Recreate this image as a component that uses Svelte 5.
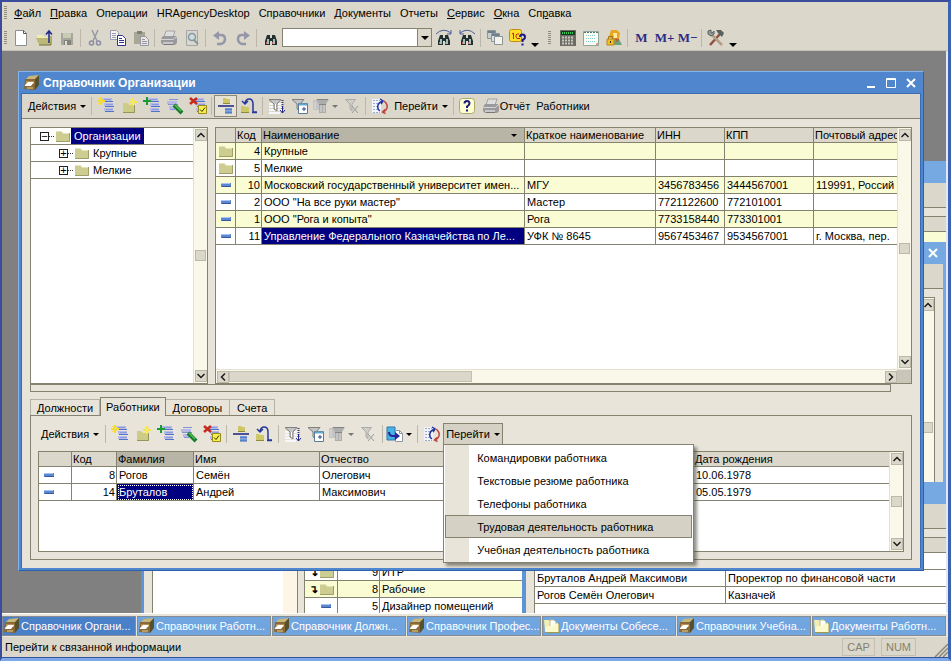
<script>
  const menus = [
    ['', 'Ф', 'айл'], ['', 'П', 'равка'], ['Операции', '', ''], ['HRAgencyDesktop', '', ''],
    ['Справочники', '', ''], ['Документы', '', ''], ['Отчеты', '', ''], ['', 'С', 'ервис'],
    ['', 'О', 'кна'], ['Сп', 'р', 'авка']
  ];

  const standardTools = [
    ['new', 'Новый'], ['open', 'Открыть'], ['save', 'Сохранить'], null,
    ['cut', 'Вырезать'], ['copy', 'Копировать'], ['paste', 'Вставить'], null,
    ['print', 'Печать'], ['preview', 'Просмотр'], null,
    ['undo', 'Отменить'], ['redo', 'Повторить'], null,
    ['find', 'Найти']
  ];

  const listTools = [
    ['additem', 'Добавить'], ['addfolder', 'Новая группа'], ['addcopy', 'Добавить копированием'],
    ['edit', 'Изменить'], ['mark', 'Пометить на удаление'], null,
    ['hier', 'Иерархический просмотр'], ['move', 'Переместить в группу'], null,
    ['filtersort', 'Отбор и сортировка'], ['filterval', 'Отбор по значению'],
    ['filterhist', 'История отборов'], ['filteroff', 'Отключить отбор'], null
  ];

  const orgs = [
    ['folder', 4, 'Крупные', '', '', '', ''],
    ['folder', 5, 'Мелкие', '', '', '', ''],
    ['item', 10, 'Московский государственный университет имен...', 'МГУ', '3456783456', '3444567001', '119991, Россий'],
    ['item', 2, 'ООО "На все руки мастер"', 'Мастер', '7721122600', '772101001', ''],
    ['item', 1, 'ООО "Рога и копыта"', 'Рога', '7733158440', '773301001', ''],
    ['item', 11, 'Управление Федерального Казначейства по Ле...', 'УФК № 8645', '9567453467', '9534567001', 'г. Москва, пер.']
  ];

  const workers = [
    [8, 'Рогов', 'Семён', 'Олегович', '10.06.1978'],
    [14, 'Бруталов', 'Андрей', 'Максимович', '05.05.1979']
  ];

  const tabs = ['Должности', 'Работники', 'Договоры', 'Счета'];
  let activeTab = $state('Работники');
  let menuOpen = $state(true);
  let query = $state('');

  const goMenu = [
    'Командировки работника', 'Текстовые резюме работника', 'Телефоны работника',
    'Трудовая деятельность работника', 'Учебная деятельность работника'
  ];

  const tasks = [
    ['book', 'Справочник Органи...'], ['book', 'Справочник Работн...'], ['book', 'Справочник Должн...'],
    ['book', 'Справочник Профес...'], ['docs', 'Документы Собесе...'],
    ['book', 'Справочник Учебна...'], ['docs', 'Документы Работн...']
  ];
</script>

{#snippet bars()}
  <path d="M4 1.500h10M6 6.500h9M6 11.500h9" stroke="#b9b9e6" stroke-width="3" />
  <path d="M5 3.500h10M7 8.500h9M7 13.500h9" stroke="#4f74c8" />
  <path d="M6 1.500h7M8 6.500h7M8 11.500h7" stroke="#8d9ddb" />
{/snippet}

{#snippet funnel(c)}
  <path d="M0 1.500h12L8 6v7l-3-2V6z" fill={c} stroke="#80807c" />
  <path d="M6.500 6v5" stroke="#fff" />
{/snippet}

{#snippet binoculars()}
  <path d="M4 5h3v3h2V5h3l1 3 1 3v4H9v-4H7v4H2v-4l1-3z" fill="#24302f" />
  <path d="M4 9h2v5H4zM10 9h2v5h-2z" fill="#a4c0bd" />
  <path d="M3 12h1v2H3zM9 12h1v2H9z" fill="#c66" />
{/snippet}

{#snippet icon(name)}
  <svg class="icon" viewBox="0 0 16 16" fill="none" aria-hidden="true">
    {#if name === 'new'}
      <path d="M2.500.5h8l3 3v12h-11z" fill="#fff" stroke="#8b8f94" /><path d="M10.500.5v3h3" stroke="#555" />
    {:else if name === 'open'}
      <path d="M1 5h6l1 2h7v8H2z" fill="#eeeeb0" /><path d="M0 8h13l2 7H3z" fill="#bcb878" /><path d="M3 15h12V6" stroke="#77733a" /><path d="M13 13V2M10 4.500L13 1l3 3.500" stroke="#1d2b86" stroke-width="1.500" />
    {:else if name === 'save'}
      <path d="M2 3h12v12H2z" fill="#a6a69a" /><path d="M4 3h8v5H4z" fill="#c8cbb4" /><path d="M5 10h7v5H5z" fill="#83837b" /><path d="M6 11h2v4H6z" fill="#deded4" />
    {:else if name === 'cut'}
      <path d="M5 0l5 11M11 0L6 11" stroke="#9a9aa6" stroke-width="1.500" /><circle cx="4.500" cy="13" r="2" stroke="#8c8ca5" stroke-width="1.500" /><circle cx="11.500" cy="13" r="2" stroke="#8c8ca5" stroke-width="1.500" />
    {:else if name === 'copy'}
      <path d="M.5.500h6l2 2v7h-8z" fill="#f4f4ee" stroke="#9b9bb4" /><path d="M2 3.500h4M2 5.500h4M2 7.500h4" stroke="#9b9bb4" /><path d="M7.500 5.500h5l3 3v7h-8z" fill="#fff" stroke="#33338f" /><path d="M9 8.500h3M9 10.500h5M9 12.500h5" stroke="#33338f" />
    {:else if name === 'paste'}
      <path d="M1 2h11v12H1z" fill="#a9a795" /><path d="M4 1h5v3H4z" fill="#7f7f77" /><path d="M7.500 6.500h5l3 3v6h-8z" fill="#e9e7de" stroke="#9797a5" /><path d="M9 9.500h3M9 11.500h5M9 13.500h5" stroke="#9797a5" />
    {:else if name === 'print'}
      <path d="M5 1h9l-2 6H3z" fill="#dedede" stroke="#a2a2a2" /><path d="M2 6h13l1 2v5l-2 2H2l-2-2V9z" fill="#9a9a9e" /><path d="M0 9.500h12l4-3" stroke="#d4d4d4" /><path d="M2 12h10v2H2z" fill="#c8c8c8" /><path d="M3 14.500h9" stroke="#777" />
    {:else if name === 'preview'}
      <path d="M2.500.5h11v15h-11z" fill="#dad8ce" stroke="#a3a7a7" /><circle cx="8" cy="7" r="3.500" fill="#cddcdd" stroke="#8596a0" stroke-width="1.500" /><path d="M10 10l4 4" stroke="#8596a0" stroke-width="2" />
    {:else if name === 'undo'}
      <path d="M4 5h5q4 0 4 4t-4 5H5" stroke="#9696ab" stroke-width="2.500" /><path d="M1 5.500L7 1v9z" fill="#9696ab" />
    {:else if name === 'redo'}
      <path d="M12 5H7q-4 0-4 4t4 5h4" stroke="#9696ab" stroke-width="2.500" /><path d="M15 5.500L9 1v9z" fill="#9696ab" />
    {:else if name === 'find'}
      {@render binoculars()}
    {:else if name === 'findnext'}
      <path d="M0 4Q7-3 15 3M15 0v4h-4" stroke="#4b5c9a" />{@render binoculars()}
    {:else if name === 'findprev'}
      <path d="M16 4Q9-3 1 3M1 0v4h4" stroke="#4b5c9a" />{@render binoculars()}
    {:else if name === 'windows'}
      <path d="M.5.500h8v8h-8z" fill="#c9d0d2" stroke="#8d9494" /><path d="M1 1h7v2H1z" fill="#6e7f90" /><path d="M4.500 3.500h8v8h-8z" fill="#dce2e2" stroke="#8d9494" /><path d="M5 4h7v2H5z" fill="#6e7f90" /><path d="M7.500 6.500h8v8h-8z" fill="#f2f2ee" stroke="#8d9494" />
    {:else if name === 'help1c'}
      <rect x="-.5" y="-.5" width="12" height="12" rx="2" fill="#ffdf25" stroke="#c08a18" /><path d="M2 4l1.500-1v6M9 4H7L6 5v2l1 1.500h3" stroke="#c4251d" /><path d="M10 7q0-2.500 2.500-2.500T15 7q0 2-2.500 3v2M12.500 13.500v2" stroke="#1b1b84" stroke-width="2" />
    {:else if name === 'calc'}
      <path d="M0 0h16v16H0z" fill="#6d6d66" /><path d="M1 1h14v4H1z" fill="#11371c" /><path d="M2 3h12" stroke="#35cc57" stroke-width="2" stroke-dasharray="1 1" /><path d="M2 7.500h12M2 10.500h12M2 13.500h12" stroke="#c8c8be" stroke-width="2" stroke-dasharray="2 1" />
    {:else if name === 'calendar'}
      <path d="M.5 1.500h15v14H.5z" fill="#fffff3" stroke="#8fa59f" /><path d="M1 2.500h14" stroke="#4e7770" stroke-dasharray="2 1" /><path d="M3 5.500h10M3 8.500h10M3 11.500h10" stroke="#80ced2" stroke-dasharray="1 1" /><path d="M13 14h2" stroke="#d33" />
    {:else if name === 'user'}
      <path d="M5 0h6l3 3-1 6H6L3 7z" fill="#e8a81e" /><path d="M7 3h4v5H8z" fill="#ffe9a0" /><path d="M8 9h5l3 6H8z" fill="#6aa47f" /><path d="M9 8l4 1-2 4z" fill="#c53" /><path d="M1 9h7v6H1z" fill="#f4bf20" stroke="#b9851a" /><path d="M2.500 9V6.500h4V9" stroke="#a2731a" /><path d="M4 11h1v2H4z" fill="#332" />
    {:else if name === 'tools'}
      <path d="M2 15L12 4" stroke="#8e5140" stroke-width="2.500" /><path d="M3 4l11 11" stroke="#b59a85" stroke-width="2.500" /><path d="M8 0h5l3 3-2 4-4-4z" fill="#56615f" /><path d="M0 1v3l3 2 3-2V1L4 3H3V0z" fill="#94a09d" stroke="#59605e" />
    {:else if name === 'book'}
      <path d="M5 1l10-1-3 4H2z" fill="#c8b77a" /><path d="M1 4h10v11L0 14z" fill="#8b6936" /><path d="M11 4l4-4v10l-4 5z" fill="#55502e" /><path d="M2 6h8v3H2z" fill="#b88d4d" /><path d="M1 10l3-3h6l-3 4H1z" fill="#fff" /><path d="M3 13h6" stroke="#ddd08f" />
    {:else if name === 'docs'}
      <path d="M0 2h5l2 3h7v9H1z" fill="#f2edb0" /><path d="M6 2h4l2 2v5H6z" fill="#fff" stroke="#c5c08e" /><path d="M1 14l2-6h5l2-2h5v8z" fill="#fbf8cc" /><path d="M1 14.500h14V5" stroke="#a09848" />
    {:else if name === 'folder'}
      <path d="M1 3h5l2 2h7v9H1z" fill="#cdcc91" /><path d="M1 3.500h5l2 2h7" stroke="#e5e4b9" /><path d="M1 13.500h13.500V5" stroke="#a19f68" />
    {:else if name === 'item'}
      <path d="M3 6h10v4H3z" fill="#5c86d2" /><path d="M3 6.500h9" stroke="#a9c4ee" /><path d="M4 9.500h9" stroke="#36589c" />
    {:else if name === 'additem'}
      {@render bars()}<path d="M3 -1v8M-1 3h8" stroke="#f6dc2e" stroke-width="2" /><path d="M0 0l6 6M6 0L0 6" stroke="#f0d65a" />
    {:else if name === 'addfolder'}
      <path d="M2 5h4l2 2h6v8H2z" fill="#cdcc85" /><path d="M2 14.500h11.500V7" stroke="#96945a" /><path d="M12 0v8M8 4h8" stroke="#f4e54a" stroke-width="2" /><path d="M9 1l6 6M15 1L9 7" stroke="#f4e98a" />
    {:else if name === 'addcopy'}
      {@render bars()}<path d="M3-1v8M-1 3h8" stroke="#1b9b33" stroke-width="2" />
    {:else if name === 'edit'}
      <path d="M0 4.500h10M2 9.500h6" stroke="#b9b9e6" stroke-width="3" /><path d="M2 1.500h9M1 6.500h10M3 11.500h5" stroke="#7f95d8" /><path d="M7 7l8 8" stroke="#167a2c" stroke-width="4" /><path d="M8 7l6 6" stroke="#53c24e" stroke-width="1.500" />
    {:else if name === 'mark'}
      {@render bars()}<path d="M0 0l7 6M7 0L0 6" stroke="#c52a1d" stroke-width="2.500" /><path d="M8.500 7.500h8v8h-8z" fill="#f5ef4d" stroke="#9b8d1c" /><path d="M10 11.500l2 2 3-4" stroke="#33320c" />
    {:else if name === 'hier'}
      <path d="M5 0h3l1 1h3v4H5z" fill="#cdc767" /><path d="M5 5.500h7" stroke="#8f8a3c" /><path d="M0 8h16" stroke="#18227c" stroke-width="1.500" /><path d="M7 10h7v2H7zM7 13h7v2H7z" fill="#6f9be4" /><path d="M7 12h7M7 15h7" stroke="#3b62b3" />
    {:else if name === 'move'}
      <path d="M0 8h3l1 1h4v6H0z" fill="#cdc767" /><path d="M0 14.500h8" stroke="#8f8a3c" /><path d="M4 5Q5 1 8 1q4 0 4 5v8h4M1 3l3 3 3-3M11 14.500h5" stroke="#24389c" stroke-width="1.500" />
    {:else if name === 'filtersort'}
      <path d="M0 6h13M0 9h13M0 12h13M0 15h11" stroke="#f7f7fb" stroke-width="2" />{@render funnel('#c4c4c4')}<path d="M13.500 2v9" stroke="#39396e" stroke-dasharray="1 1" stroke-width="2" /><path d="M13.500 8v7M11 12l2.500 3 2.500-3" stroke="#26268f" />
    {:else if name === 'filterval'}
      {@render funnel('#c4c4c4')}<path d="M6.500 5.500h9v10h-9z" fill="#fdfdfd" stroke="#5c7b98" /><path d="M7 6.500h8" stroke="#62a8cf" stroke-width="2" /><path d="M11 10h2v2h-2z" stroke="#37408e" />
    {:else if name === 'filterhist'}
      <path d="M0 2h10v10H0z" fill="#c4c4c4" /><path d="M3 1h13l-3 5v9H6V6z" fill="#adadad" /><path d="M4 1.500h11M6 6.500h7" stroke="#858585" /><path d="M8 7v7M11 7v7M2 4v7" stroke="#ddd" />
    {:else if name === 'filteroff'}
      <path d="M1.500 1.500h10L8 6v7l-2-2V6z" fill="#cfcfc8" stroke="#aaa" /><path d="M8 8l6 7M14 8l-6 7" stroke="#999" />
    {:else if name === 'refresh'}
      <path d="M0 1h9v14H0z" fill="#f3f4fb" /><path d="M1 2.500h7M1 5.500h5M1 8.500h4M1 11.500h5M1 14.500h7" stroke="#9aa9cf" stroke-dasharray="2 1" /><path d="M8 13q-3-2-2-6 1-3 5-4M8 1l3 2-2 3" stroke="#20349e" stroke-width="1.500" /><path d="M12 3q4 3 3 7-1 3-4 4M13 11.500L10.500 14l3 1.500" stroke="#bf4038" stroke-width="1.500" />
    {:else if name === 'help'}
      <rect x=".5" y=".5" width="15" height="15" rx="3" fill="#ffffd2" stroke="#aaa96b" /><path d="M5.500 5.500Q5.500 3 8 3t2.500 2.500Q10.500 7 8 8.500V10M8 11.500v2" stroke="#1b1b84" stroke-width="2" />
    {:else if name === 'goto'}
      <path d="M0 1h8v13H0z" fill="#45b4e4" stroke="#3474ae" /><path d="M8.500 4.500h4l3 3v8h-7z" fill="#fff" stroke="#8e96a0" /><path d="M12.500 4.500v3h3" stroke="#8e96a0" /><path d="M2 6q0 4 4 4h3" stroke="#24249c" stroke-width="2" /><path d="M8 6l5 4-5 4z" fill="#24249c" />
    {/if}
  </svg>
{/snippet}

{#snippet tool(t, pressed)}
  {#if t}
    <button class="tool" class:pressed class:wide={t[0] === 'filterhist'} aria-label={t[1]}>
      {@render icon(t[0])}
      {#if t[0] === 'filterhist'}<i class="caret dim"></i>{/if}
    </button>
  {:else}
    <span class="sep"></span>
  {/if}
{/snippet}

{#snippet chevron(d)}
  <span class="sbtn"><svg viewBox="0 0 10 10" aria-hidden="true"><path {d} fill="none" stroke="#1c1c1c" stroke-width="1.500" /></svg></span>
{/snippet}

{#snippet vscroll()}
  <div class="vscroll">
    {@render chevron('M1.500 7L5 3.500 8.500 7')}
    <span class="thumb"></span>
    {@render chevron('M1.500 3L5 6.500 8.500 3')}
  </div>
{/snippet}

<div class="app">
  <nav class="menubar">
    <span class="grip"></span>
    {#each menus as [a, u, b]}
      <button>{a}{#if u}<u>{u}</u>{/if}{b}</button>
    {/each}
  </nav>

  <div class="apptools">
    <span class="grip"></span>
    {#each standardTools as t}{@render tool(t, false)}{/each}
    <div class="combo">
      <input type="text" aria-label="Поиск" bind:value={query} />
      <button aria-label="Раскрыть"><i class="caret big"></i></button>
    </div>
    {@render tool(['findnext', 'Найти далее'], false)}
    {@render tool(['findprev', 'Найти ранее'], false)}
    {@render tool(null, false)}
    {@render tool(['windows', 'Окна'], false)}
    {@render tool(['help1c', 'Справка'], false)}
    <button class="more" aria-label="Ещё"><i class="caret big"></i></button>
    <span class="grip second"></span>
    {@render tool(['calc', 'Калькулятор'], false)}
    {@render tool(['calendar', 'Календарь'], false)}
    {@render tool(['user', 'Пользователи'], false)}
    {@render tool(null, false)}
    <button class="tool mem">M</button>
    <button class="tool mem">M+</button>
    <button class="tool mem">M−</button>
    {@render tool(null, false)}
    {@render tool(['tools', 'Сервис'], false)}
    <button class="more" aria-label="Ещё"><i class="caret big"></i></button>
  </div>

  <main class="desktop">
    <section class="win back upper">
      <div class="title"></div>
      <div class="strip"></div>
      <div class="pad"></div>
      <div class="headstrip"></div>
      <div class="yellow"></div>
    </section>

    <section class="win back middle">
      <div class="title"><button aria-label="Закрыть"><svg viewBox="0 0 12 12"><path d="M2 2l8 8M10 2l-8 8" stroke="#fff" stroke-width="2" /></svg></button></div>
      <div class="inside">
        <div class="strip"></div>
        <div class="well">{@render vscroll()}</div>
      </div>
    </section>

    <section class="win back lower">
      <div class="title"></div>
      <div class="strip"></div>
      <div class="sheet">
        <table class="grid">
          <colgroup><col class="w-fio" /><col /></colgroup>
          <thead><tr><th></th><th></th></tr></thead>
          <tbody>
            <tr><td></td><td></td></tr>
            <tr><td>Бруталов Андрей Максимови</td><td>Проректор по финансовой части</td></tr>
            <tr><td>Рогов Семён Олегович</td><td>Казначей</td></tr>
          </tbody>
        </table>
      </div>
    </section>

    <section class="win posts">
      <div class="blank"></div>
      <div class="blankscroll"></div>
      <div class="postlist">
        <table class="grid">
          <colgroup><col class="w-mark" /><col class="w-num" /><col /></colgroup>
          <tbody>
            <tr><td class="pic"><span class="down">↴</span>{@render icon('folder')}</td><td class="num">9</td><td>ИТР</td></tr>
            <tr class="alt"><td class="pic"><span class="down">↴</span>{@render icon('folder')}</td><td class="num">8</td><td>Рабочие</td></tr>
            <tr><td class="pic right">{@render icon('item')}</td><td class="num">5</td><td>Дизайнер помещений</td></tr>
          </tbody>
        </table>
      </div>
    </section>

    <section class="win active">
      <header class="title">
        {@render icon('book')}
        <h1>Справочник Организации</h1>
        <button aria-label="Свернуть"><svg viewBox="0 0 12 12"><path d="M2 10h8" stroke="#fff" stroke-width="2" /></svg></button>
        <button aria-label="Развернуть"><svg viewBox="0 0 12 12"><path d="M1.500 1.500h9v9h-9zM1 2.500h10" fill="none" stroke="#fff" /></svg></button>
        <button aria-label="Закрыть"><svg viewBox="0 0 12 12"><path d="M2 2l8 8M10 2l-8 8" stroke="#fff" stroke-width="2" /></svg></button>
      </header>

      <div class="inside">
        <div class="toolbar main">
          <button class="text">Действия<i class="caret"></i></button>
          <span class="sep"></span>
          {#each listTools as t}{@render tool(t, t?.[0] === 'hier')}{/each}
          {@render tool(['refresh', 'Обновить'], false)}
          <button class="text">Перейти<i class="caret"></i></button>
          <span class="sep"></span>
          {@render tool(['help', 'Справка'], false)}
          <button class="text withicon">{@render icon('print')}Отчёт</button>
          <button class="text">Работники</button>
        </div>

        <div class="body">
          <div class="split">
            <div class="box tree">
              <ul>
                <li><span class="exp">−</span><span class="dots"></span>{@render icon('folder')}<span class="label sel">Организации</span></li>
                <li class="child"><span class="exp">+</span><span class="dots"></span>{@render icon('folder')}<span class="label">Крупные</span></li>
                <li class="child"><span class="exp">+</span><span class="dots"></span>{@render icon('folder')}<span class="label">Мелкие</span></li>
              </ul>
              {@render vscroll()}
            </div>

            <div class="box list">
              <div class="rows">
                <div class="clip">
                  <table class="grid">
                    <colgroup><col class="w-pic" /><col class="w-code" /><col class="w-name" /><col class="w-short" /><col class="w-inn" /><col class="w-kpp" /><col /></colgroup>
                    <thead>
                      <tr><th></th><th>Код</th><th class="sorted"><span class="sort">Наименование<i class="caret"></i></span></th><th>Краткое наименование</th><th>ИНН</th><th>КПП</th><th>Почтовый адрес</th></tr>
                    </thead>
                    <tbody>
                      {#each orgs as [kind, code, name, short, inn, kpp, addr], i}
                        <tr class:alt={i % 2 === 0}>
                          <td class="pic">{@render icon(kind)}</td>
                          <td class="num">{code}</td>
                          <td class:sel={code === 11}>{name}</td>
                          <td>{short}</td><td>{inn}</td><td>{kpp}</td><td>{addr}</td>
                        </tr>
                      {/each}
                    </tbody>
                  </table>
                </div>
                {@render vscroll()}
              </div>
              <div class="hscroll">
                {@render chevron('M7 1.500L3.500 5 7 8.500')}
                <div class="track"><span></span></div>
                {@render chevron('M3 1.500L6.500 5 3 8.500')}
                <span class="corner"></span>
              </div>
            </div>
          </div>

          <div class="splitter"></div>

          <div class="tabs" role="tablist">
            {#each tabs as t}
              <button role="tab" aria-selected={activeTab === t} class:on={activeTab === t} onclick={() => (activeTab = t)}>{t}</button>
            {/each}
          </div>

          <div class="page">
            <div class="toolbar">
              <button class="text">Действия<i class="caret"></i></button>
              <span class="sep"></span>
              {#each listTools as t}{@render tool(t, false)}{/each}
              <button class="tool wide" aria-label="Ввести на основании">{@render icon('goto')}<i class="caret"></i></button>
              <span class="sep"></span>
              {@render tool(['refresh', 'Обновить'], false)}
              <div class="dropdown">
                <button class="text opened" aria-expanded={menuOpen} onclick={() => (menuOpen = !menuOpen)}>Перейти<i class="caret"></i></button>
                {#if menuOpen}
                  <div class="menu" role="menu">
                    {#each goMenu as m, i}
                      <button role="menuitem" class:hot={i === 3}>{m}</button>
                    {/each}
                  </div>
                {/if}
              </div>
            </div>
            <div class="box staff">
              <div class="clip">
                <table class="grid">
                  <colgroup><col class="w-mark" /><col class="w-id" /><col class="w-last" /><col class="w-first" /><col class="w-mid" /><col /></colgroup>
                  <thead><tr><th></th><th>Код</th><th class="sorted">Фамилия</th><th>Имя</th><th>Отчество</th><th>Дата рождения</th></tr></thead>
                  <tbody>
                    {#each workers as [code, last, first, mid, born]}
                      <tr>
                        <td class="pic left">{@render icon('item')}</td>
                        <td class="num">{code}</td>
                        <td class:sel={code === 14} class:focus={code === 14}>{last}</td>
                        <td>{first}</td><td>{mid}</td><td>{born}</td>
                      </tr>
                    {/each}
                  </tbody>
                </table>
              </div>
              {@render vscroll()}
            </div>
          </div>
        </div>
      </div>
    </section>
  </main>

  <nav class="taskbar">
    {#each tasks as [kind, label], i}
      <button class:current={i === 0}>{@render icon(kind)}<span>{label}</span></button>
    {/each}
  </nav>

  <footer class="status">
    <span class="hint">Перейти к связанной информации</span>
    <span class="key">CAP</span>
    <span class="key">NUM</span>
    <svg class="resize" viewBox="0 0 14 14" aria-hidden="true"><path d="M1 14L14 1M5 14l9-9M9 14l5-5" stroke="#8b887c" stroke-width="1.500" /></svg>
  </footer>
</div>

<style>
  :global(body) { margin: 0; background: #7ea9e8; }
  * { box-sizing: border-box; }
  .app {
    --face: #dbd7ca;
    --paper: #e8e4d9;
    --line: #85826f;
    display: flex;
    flex-direction: column;
    height: 100vh;
    border-style: solid;
    border-color: #3c4c9c #3c62b4 #7ea9e8 #3c4c9c;
    border-width: 2px 3px 3px 2px;
    background: var(--face);
    font: 11px/16px "Liberation Sans", Arial, sans-serif;
    color: #000;
    overflow: hidden;
  }
  button { font: inherit; color: inherit; background: none; border: 0; padding: 0; margin: 0; white-space: nowrap; }
  .icon { width: 16px; height: 16px; flex: none; display: block; overflow: visible; }
  .caret { display: inline-block; border: 3px solid transparent; border-top-color: #000; border-bottom: 0; flex: none; }
  .caret.big { border-width: 4px 4px 0; }
  .caret.dim { border-top-color: #777; }
  .grip { width: 3px; height: 13px; flex: none; background: repeating-linear-gradient(#8f8c7e 0 1px, transparent 1px 2px); }

  .menubar { display: flex; align-items: center; gap: 9px; height: 23px; padding: 0 0 2px 2px; flex: none; }
  .menubar .grip { margin-right: -2px; }
  .apptools { display: flex; align-items: center; height: 26px; padding-left: 2px; border-bottom: 1px solid #c5c1b4; flex: none; }
  .apptools .grip { margin-right: 2px; }
  .apptools .grip.second { margin: 0 5px 0 7px; }
  .tool { width: 23px; height: 22px; display: flex; align-items: center; justify-content: center; flex: none; }
  .tool.wide { width: 29px; gap: 3px; }
  .tool.pressed { border: 1px solid #8b887c; background: #e6e2d6; }
  .tool.mem { font: bold 13px/16px "Liberation Serif", serif; color: #2c2c84; }
  .sep { width: 5px; height: 18px; flex: none; background: linear-gradient(#bbb7aa, #bbb7aa) center / 1px 100% no-repeat; }
  .page .sep { width: 6px; }
  .combo { display: flex; width: 150px; height: 19px; border: 1px solid #85826f; background: #fff; }
  .combo input { flex: 1; min-width: 0; border: 0; padding: 0 3px; font: inherit; outline: 0; background: #fff; }
  .combo button, .more { width: 14px; display: flex; align-items: center; justify-content: center; }
  .combo button { border-left: 1px solid #85826f; background: var(--face); }
  .more { height: 18px; width: 12px; align-items: flex-end; }

  .desktop { position: relative; flex: 1; min-height: 0; overflow: hidden; background: #808080; border-right: 2px solid #dfe8f4; }
  .win { position: absolute; background: var(--paper); }
  .win .title { height: 22px; display: flex; align-items: center; }
  .title button { width: 20px; height: 20px; display: flex; align-items: center; justify-content: center; }
  .title svg:not(.icon) { width: 12px; height: 12px; }
  .back .title { background: #76a9e2; justify-content: flex-end; }
  .strip { height: 25px; background: var(--face); border-bottom: 1px solid var(--line); }
  .upper { top: 110px; left: 300px; right: 0; height: 300px; }
  .upper .pad { height: 9px; border-bottom: 1px solid var(--line); }
  .upper .headstrip { height: 15px; background: var(--face); border-bottom: 1px solid var(--line); }
  .upper .yellow { height: 12px; background: #fafcd4; }
  .middle { top: 191px; left: 320px; right: 0; height: 350px; border-right: 3px solid #76a9e2; }
  .middle .title { margin-right: -3px; padding-right: 3px; }
  .middle .well { display: flex; justify-content: flex-end; height: 260px; margin: 8px 8px 0; border: 1px solid var(--line); background: #fff; }
  .lower { top: 431px; left: 524px; right: 0; bottom: 0; }
  .sheet { margin: 8px 0 0 8px; height: 90px; border-top: 1px solid var(--line); border-left: 1px solid var(--line); background: #fff; }
  .posts { left: 139px; width: 385px; bottom: -2px; height: 200px; display: flex; border: solid #5d94d8; border-width: 0 4px 0 3px; padding-left: 8px; }
  .blank { width: 131px; border-left: 1px solid var(--line); background: #fff; }
  .blankscroll { width: 15px; background: #fdf6e6; border: solid var(--line); border-width: 0 1px 0 0; margin-right: 6px; }
  .postlist { flex: 1; display: flex; align-items: flex-end; background: #fff; border-left: 1px solid var(--line); }

  .active { left: 16px; right: 22px; top: 20px; background: #4f86cd; border-style: solid; border-color: #86b3ea #2f61ab #2f61ab #86b3ea; border-width: 1px; padding: 0 2px 2px; }
  .active .title { height: 21px; padding: 0 0 0 3px; gap: 0; color: #fff; }
  .active h1 { flex: 1; margin: 0 0 0 3px; font: bold 12px/16px "Liberation Sans", Arial, sans-serif; }
  .active > .inside { border: 1px solid #3a6cb4; border-bottom: 0; background: var(--paper); }
  .toolbar { display: flex; align-items: center; height: 22px; }
  .toolbar.main { height: 25px; padding-left: 3px; background: var(--face); border-bottom: 1px solid var(--line); }
  .toolbar .text { display: flex; align-items: center; gap: 4px; height: 22px; padding: 0 3px; }
  .toolbar .withicon { gap: 1px; padding-left: 4px; }
  .body { padding: 8px; }
  .split { display: flex; gap: 7px; height: 257px; }
  .box { border: 1px solid var(--line); background: #fff; display: flex; min-width: 0; }
  .tree { width: 178px; flex: none; }
  .tree ul { flex: 1; margin: 0; padding: 0; list-style: none; }
  .tree li { display: flex; align-items: center; height: 17px; padding-left: 9px; border-bottom: 1px solid var(--line); }
  .tree li.child { padding-left: 28px; }
  .exp { width: 9px; height: 9px; border: 1px solid #222; font-size: 11px; line-height: 7px; text-align: center; flex: none; }
  .dots { width: 6px; height: 1px; background: repeating-linear-gradient(90deg, #333 0 1px, transparent 1px 2px); }
  .tree .label { padding: 0 3px; }
  .sel { background: #000080 !important; color: #fff; }
  .vscroll { width: 14px; flex: none; display: flex; flex-direction: column; align-items: center; justify-content: space-between; padding: 1px 0; background: #faf8e8; border-left: 1px solid #e4e0d0; }
  .sbtn { width: 12px; height: 12px; flex: none; display: flex; background: var(--face); border: 1px solid #bcb8aa; }
  .sbtn svg { width: 10px; height: 10px; }
  .thumb { width: 11px; height: 11px; background: var(--face); border: 1px solid #bcb8aa; }
  .list { flex: 1; flex-direction: column; }
  .rows { flex: 1; display: flex; min-height: 0; }
  .clip { flex: 1; min-width: 0; overflow: hidden; }
  .hscroll { display: flex; align-items: center; height: 14px; padding-left: 1px; background: #faf8e8; border-top: 1px solid #e4e0d0; }
  .track { flex: 1; display: flex; }
  .track span { width: 37%; height: 11px; background: var(--face); border: 1px solid #c4c0b2; }
  .corner { width: 14px; height: 13px; background: #c9c5b8; }

  .grid { width: 100%; table-layout: fixed; border-collapse: separate; border-spacing: 0; background: #fff; }
  .grid th, .grid td { height: 17px; line-height: 16px; padding: 0 2px; border: solid var(--line); border-width: 0 1px 1px 0; overflow: hidden; white-space: nowrap; text-align: left; font-weight: normal; }
  .grid th { height: 15px; line-height: 14px; padding: 0 1px; background: var(--face); }
  .grid th:last-child, .grid td:last-child { border-right: 0; }
  .grid th.sorted { background: #b8b4a6; }
  .sort { display: flex; align-items: center; justify-content: space-between; padding-right: 6px; }
  .grid .alt td { background: #fafcd4; }
  .grid td.num { text-align: right; padding: 0 1px; }
  .grid td.focus { outline: 1px dotted #fff; outline-offset: -2px; }
  .grid td.pic .icon { width: 16px; height: 16px; margin: 0 auto; }
  .grid td.pic.left .icon { margin-left: 0; }
  .grid td.pic.right .icon { margin-right: 1px; }
  .posts td.pic .icon { float: right; }
  .down { float: left; width: 12px; text-align: center; font-weight: bold; }
  .w-pic { width: 20px; } .w-code { width: 26px; } .w-name { width: 263px; } .w-short { width: 131px; }
  .w-inn { width: 69px; } .w-kpp { width: 89px; } .w-mark { width: 33px; } .w-id { width: 45px; }
  .w-num { width: 42px; } .w-last { width: 77px; } .w-first { width: 126px; } .w-mid { width: 374px; } .w-fio { width: 191px; }

  .splitter { height: 8px; margin-right: 21px; border: 1px solid var(--line); }
  .tabs { display: flex; align-items: flex-end; margin-top: 6px; height: 17px; }
  .tabs button { height: 16px; padding: 0 7px; border: 1px solid #b5b1a3; border-bottom: 0; border-left: 0; }
  .tabs button:first-child { border-left: 1px solid #b5b1a3; padding: 0 6px; }
  .tabs button.on { height: 19px; margin-bottom: -1px; padding: 0 5px; border: 1px solid var(--line); border-bottom: 0; background: var(--paper); position: relative; z-index: 1; }
  .page { border: 1px solid var(--line); padding: 7px; }
  .staff { height: 101px; margin-top: 6px; }

  .dropdown { position: relative; }
  .toolbar .opened { border: 1px solid var(--line); background: #d5d1c4; padding: 0 2px; }
  .menu { position: absolute; z-index: 5; top: 21px; left: 0; width: 251px; padding: 1px; border: 1px solid var(--line); background: linear-gradient(90deg, #fff 1px, #e8e4d9 1px 25px, #fff 25px); box-shadow: 3px 3px 3px rgba(60, 60, 50, .55); }
  .menu button { display: block; width: 100%; height: 23px; padding-left: 31px; border: 1px solid transparent; text-align: left; }
  .menu .hot { background: #d5d1c4; border-color: var(--line); }

  .taskbar { display: flex; gap: 1px; height: 24px; padding: 2px 2px 1px 0; flex: none; background: #e8e4d9; border-top: 1px solid #fff; }
  .taskbar button { flex: 1; min-width: 0; display: flex; align-items: center; gap: 1px; padding: 0 0 0 1px; border: 1px solid #868d92; background: #71a5df; color: #fff; }
  .taskbar .current { background: #4a80c8; }
  .taskbar span { overflow: hidden; text-align: left; }
  .status { display: flex; align-items: center; gap: 6px; height: 21px; padding-left: 3px; flex: none; border-bottom: 1px solid #35509c; }
  .hint { flex: 1; }
  .key { padding: 0 4px; border: 1px solid #c3bfb1; color: #85826f; }
  .resize { width: 14px; height: 14px; margin-left: 12px; align-self: flex-end; }
</style>
